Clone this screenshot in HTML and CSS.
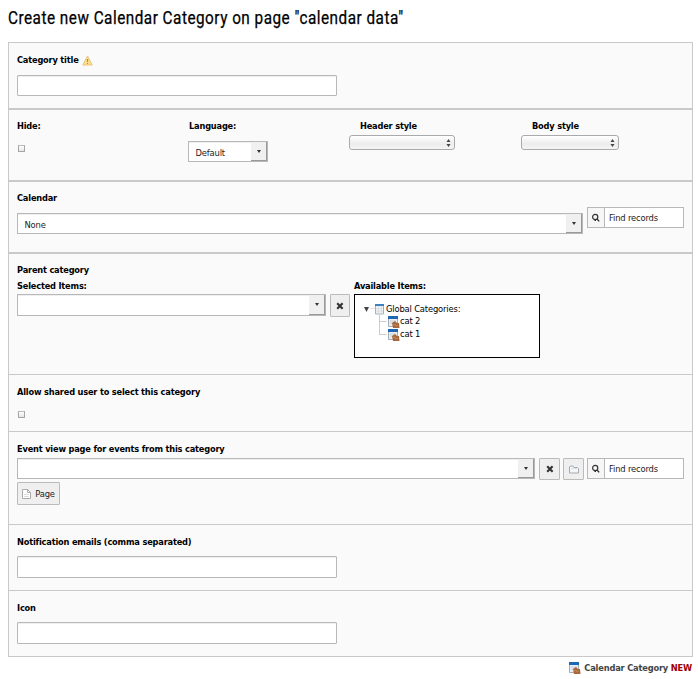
FILE: index.html
```html
<!DOCTYPE html>
<html lang="en">
<head>
<meta charset="utf-8">
<title>Create new Calendar Category</title>
<link rel="stylesheet" href="styles.css">
</head>
<body>
<svg class="defs" width="0" height="0">
  <symbol id="glass" viewBox="0 0 10 10"><circle cx="4.2" cy="4" r="2.6" fill="none" stroke="#333" stroke-width="1.2"/><path d="M3.500 7.400h1.500M6 6l2.200 2.400" stroke="#333" stroke-width="1.400"/></symbol>
  <symbol id="cross" viewBox="0 0 8 8"><path d="M1.200 1.200l5.400 5.600M6.600 1.200L1.200 6.800" stroke="#333" stroke-width="2.100"/></symbol>
  <symbol id="cat" viewBox="0 0 12 12"><path d="M.5 1h9v9.500h-9z" fill="#e9eef2" stroke="#a3adb5"/><path d="M0 0h10v3H0z" fill="#1c68b3"/><path d="M2 5h6M2 7h3" stroke="#c8d0d6"/><path d="M4 7l3-2 2 2h2l.5 5H5z" fill="#a8683c"/><path d="M5 9l2-1 1 2 2-1" fill="none" stroke="#c08855"/></symbol>
</svg>
<h1>Create new Calendar Category on page "calendar data"</h1>
<main class="form">
  <section class="thick s-title">
    <label>Category title <svg class="warn" width="11" height="11" viewBox="0 0 11 11"><path d="M5.500 1L10.200 10H.8z" fill="#fbe18c" stroke="#e9c27c" stroke-linejoin="round"/><path d="M5.500 4v3M5.500 8v1" stroke="#b98d43" stroke-width="1.200"/></svg></label>
    <div class="field"></div>
  </section>
  <section class="thick s-settings">
    <div class="cell"><label>Hide:</label><span class="check"></span></div>
    <div class="cell"><label>Language:</label><div class="select language"><span>Default</span><b class="arrow"></b></div></div>
    <div class="cell native"><label>Header style</label><div class="popup header-style"><svg width="5" height="8" viewBox="0 0 5 8"><path d="M2.500 0L4.500 3H.5zM2.500 8L4.500 5H.5z" fill="#444"/></svg></div></div>
    <div class="cell native"><label>Body style</label><div class="popup body-style"><svg width="5" height="8" viewBox="0 0 5 8"><path d="M2.500 0L4.500 3H.5zM2.500 8L4.500 5H.5z" fill="#444"/></svg></div></div>
  </section>
  <section class="thick s-calendar">
    <label>Calendar</label>
    <div class="line">
      <div class="select grow"><span>None</span><b class="arrow"></b></div>
      <div class="search"><i><svg width="10" height="10"><use href="#glass"/></svg></i><span>Find records</span></div>
    </div>
  </section>
  <section class="s-parent">
    <label>Parent category</label>
    <div class="columns">
      <div class="selected"><label>Selected Items:</label><div class="line"><div class="select grow tall"><b class="arrow"></b></div><div class="button"><svg width="8" height="8"><use href="#cross"/></svg></div></div></div>
      <div><label>Available Items:</label>
        <div class="tree">
          <div class="node root"><svg width="22" height="12" viewBox="0 0 22 12"><path d="M0 4h5L2.500 9z" fill="#444"/><path d="M6.500 5.500h4" stroke="#ddd"/><path d="M11.500 1.500h8v9.500h-8z" fill="#eef1f3" stroke="#a9b0b6"/><path d="M11 1h9v2h-9z" fill="#3f82bb"/><path d="M12 5.500h7M12 8h7M14.500 3v8M17.500 3v8" stroke="#d5dadd" stroke-width=".7"/></svg><span>Global Categories:</span></div>
          <div class="node"><svg width="9" height="13" viewBox="0 0 9 13"><path d="M.5 0v13M.5 6.500h7" stroke="#ccc"/></svg><svg class="cat" width="12" height="12"><use href="#cat"/></svg><span>cat 2</span></div>
          <div class="node"><svg width="9" height="13" viewBox="0 0 9 13"><path d="M.5 0v6M0 6.500h7.500" stroke="#ccc"/></svg><svg class="cat" width="12" height="12"><use href="#cat"/></svg><span>cat 1</span></div>
        </div>
      </div>
    </div>
  </section>
  <section class="s-shared">
    <label>Allow shared user to select this category</label>
    <span class="check"></span>
  </section>
  <section class="s-event">
    <label>Event view page for events from this category</label>
    <div class="line">
      <div class="select grow"><b class="arrow"></b></div>
      <div class="button"><svg width="8" height="8"><use href="#cross"/></svg></div>
      <div class="button folder"><svg width="10" height="9" viewBox="0 0 10 9"><path d="M.5 8V2l1-1h2.500l1 1.500h3.500l1 1V8z" fill="#f4f5f7" stroke="#a4a9b2" stroke-linejoin="round"/><path d="M2 3.500h6" stroke="#dcdfe5"/></svg></div>
      <div class="search"><i><svg width="10" height="10"><use href="#glass"/></svg></i><span>Find records</span></div>
    </div>
    <div class="button page"><svg width="9" height="10" viewBox="0 0 9 10"><path d="M.5.5h5l3 3v6h-8z" fill="#fff" stroke="#aaa"/><path d="M5.500.5v3h3" fill="none" stroke="#aaa"/><path d="M2 5.500h5M2 7.500h5" stroke="#ddd"/></svg><span>Page</span></div>
  </section>
  <section class="s-mail">
    <label>Notification emails (comma separated)</label>
    <div class="field large"></div>
  </section>
  <section class="s-icon">
    <label>Icon</label>
    <div class="field large"></div>
  </section>
</main>
<footer><svg width="12" height="12"><use href="#cat"/></svg><span>Calendar Category <em>NEW</em></span></footer>
</body>
</html>
```
FILE: styles.css
```css
* { box-sizing: border-box; }
body { margin: 0; width: 698px; height: 679px; overflow: hidden; background: #fff; color: #222; font: 8.400px/12px "DejaVu Sans", Verdana, sans-serif; letter-spacing: -.17px; }
svg { display: block; flex: none; }
.defs { position: absolute; }
h1 { margin: 0 0 0 8px; height: 42px; padding-top: 7px; font: 400 17.500px/22px "Roboto", sans-serif; letter-spacing: .56px; color: #000; white-space: nowrap; transform: scaleX(.875); transform-origin: left; -webkit-text-stroke: .25px #000; }
.form { width: 685px; margin-left: 8px; border: 1px solid #c9c9c9; border-bottom: 0; background: #fafafa; }
section { padding: 11px 8px 0; border-bottom: 1px solid #c9c9c9; }
section.thick { border-bottom-width: 2px; }
label { display: flex; height: 12px; font-weight: bold; font-size: 8.250px; letter-spacing: -.19px; color: #000; white-space: nowrap; }
.warn { margin: 1px 0 0 3px; }
.s-title { height: 67px; }
.s-settings { height: 72px; display: flex; padding-top: 10px; }
.s-calendar { height: 72px; padding-top: 10px; }
.s-parent { height: 121px; padding-top: 10px; }
.s-shared { height: 57px; }
.s-event { height: 93px; }
.s-mail, .s-icon { height: 66px; }
.field { width: 320px; height: 21px; margin-top: 9px; border: 1px solid #b8b8b8; border-radius: 1px; background: #fff; box-shadow: inset 0 1px 1px #eee; }
.field.large { height: 22px; margin-top: 8px; }
.cell { width: 172px; flex: none; }
.cell:last-child { width: 120px; }
.check { display: block; width: 7px; height: 7px; margin: 13px 0 0 1px; border: 1px solid #a5a5a5; border-top-color: #bbb; background: linear-gradient(#fff, #e6e6e6); }
.select { display: flex; height: 21px; border: 1px solid #b8b8b8; background: #fff; box-shadow: inset 0 1px 1px #eee; padding-left: 6.500px; }
.select span { padding-top: 5px; }
.select.language { width: 80px; margin: 9px 0 0 -1px; }
.select.tall { height: 22px; }
.arrow { width: 16px; margin-left: auto; border: solid #999; border-width: 0 1px 1px 0; background: #f0f0f0; display: flex; justify-content: center; align-items: center; }
.arrow::after { content: ""; border: solid transparent; border-width: 3px 2.500px 0; border-top-color: #333; }
.grow { flex: 1; }
.native label { margin-left: -1px; }
.popup { height: 15px; margin: 3px 0 0 -12px; padding-right: 3px; border: 1px solid #aaa; border-radius: 3px; background: linear-gradient(#fff, #ececec 60%, #f4f4f4); display: flex; justify-content: flex-end; align-items: center; }
.header-style { width: 106px; }
.body-style { width: 98px; }
.line { display: flex; align-items: flex-start; }
.s-calendar .line { margin-top: 3px; width: 667px; }
.s-calendar .select { margin: 6px 4px 0 0; }
.search { display: flex; width: 97px; height: 21px; border: 1px solid #b8b8b8; background: #fff; }
.search i { width: 17px; padding: 5px 0 0 3px; border-right: 1px solid #b8b8b8; background: #f6f6f6; }
.search span { padding: 4px 0 0 4px; }
.columns { display: flex; margin-top: 4px; }
.selected { width: 337px; }
.selected .line { margin-top: 2px; width: 333px; }
.button { display: flex; width: 20px; height: 22px; margin-left: 4px; align-items: center; justify-content: center; border: 1px solid #bbb; border-radius: 1px; background: #efefef; }
.selected .button { height: 23px; }
.tree { width: 186px; height: 64px; margin-top: 2px; padding: 8px 0 0 9px; border: 1px solid #000; background: #fff; color: #000; }
.node { display: flex; height: 13px; margin-left: 15px; }
.node .cat { margin-top: 1px; }
.node.root { height: 12px; margin-left: 0; }
.s-event .line { margin-top: 3px; width: 667px; }
.s-event .button { width: 21px; }
.s-event .folder { margin-right: 3px; margin-left: 3px; }
.s-event .button.page { width: 43px; height: 23px; margin: 2px 0 0; gap: 4px; }
footer { display: flex; justify-content: flex-end; width: 692px; padding-top: 5px; color: #444; font-weight: bold; font-size: 8.300px; letter-spacing: -.19px; }
footer svg { margin-right: 3px; }
footer em { color: #a00000; font-style: normal; }
```
